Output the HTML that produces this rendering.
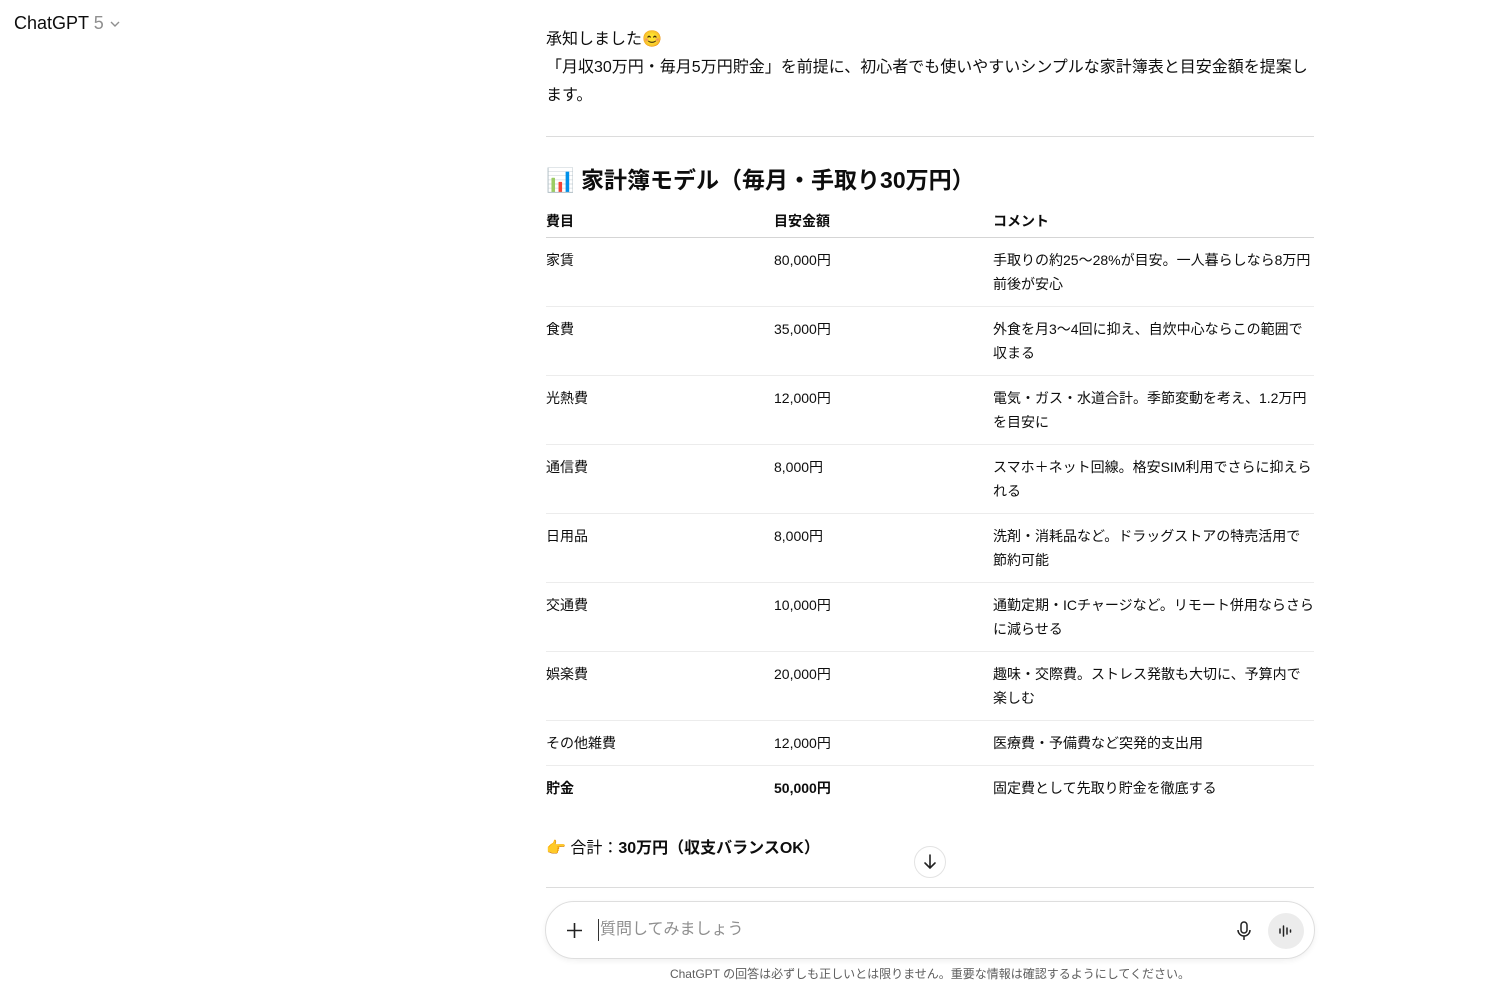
<!DOCTYPE html>
<html><head><meta charset="utf-8"><style>
*{margin:0;padding:0;box-sizing:border-box}
body{width:1500px;height:990px;background:#fff;font-family:"Liberation Sans","Noto Sans CJK JP",sans-serif;color:#0d0d0d;position:relative;overflow:hidden}
.top{position:absolute;left:14px;top:13px;font-size:18px;color:#0d0d0d}
.top span{color:#8f8f8f}
.main{position:absolute;left:546px;width:768px;top:26px}
p{font-size:16px;line-height:28px}
hr{border:0;border-top:1px solid #dcdcdc;margin:26px 0 0}
h2{font-size:23px;font-weight:700;margin-top:26px;line-height:34px}
table{width:768px;border-collapse:collapse;margin-top:10px;font-size:14px}
th{text-align:left;font-weight:700;font-size:14px;padding:5px 0 7px;border-bottom:1px solid #d5d5d5;line-height:18px}
td{vertical-align:top;padding:10px 0 10px;line-height:24px;border-bottom:1px solid #ececec}
tr:last-child td{border-bottom:0}
.c1{width:228px}.c2{width:219px}
.sum{position:absolute;left:546px;top:834px;font-size:16px}
.down{position:absolute;left:914px;top:846px;width:32px;height:32px;border:1px solid #e3e3e3;border-radius:50%;background:#fff}
.line{position:absolute;left:546px;width:768px;top:887px;border-top:1px solid #dcdcdc}
.input{position:absolute;left:545px;top:901px;width:770px;height:58px;border:1px solid #dedede;border-radius:29px;box-shadow:0 2px 6px rgba(0,0,0,.06)}
.ph{position:absolute;left:52px;top:17px;font-size:16px;color:#8f8f8f;border-left:1px solid #333;padding-left:1px;line-height:22px}
.voice{position:absolute;right:10px;top:11px;width:36px;height:36px;border-radius:50%;background:#ececec}
.foot{position:absolute;left:546px;width:768px;text-align:center;top:965px;font-size:12px;color:#5d5d5d;white-space:nowrap}
</style></head><body>
<div class="top">ChatGPT <span>5</span> <svg width="12" height="10" viewBox="0 0 12 10"><path d="M2 3l4 4 4-4" stroke="#8f8f8f" stroke-width="1.4" fill="none"/></svg></div>
<div class="main">
<p>承知しました😊<br>「月収30万円・毎月5万円貯金」を前提に、初心者でも使いやすいシンプルな家計簿表と目安金額を提案します。</p>
<hr>
<h2>📊 家計簿モデル（毎月・手取り30万円）</h2>
<table>
<tr><th class="c1">費目</th><th class="c2">目安金額</th><th>コメント</th></tr>
<tr><td>家賃</td><td>80,000円</td><td>手取りの約25〜28%が目安。一人暮らしなら8万円前後が安心</td></tr>
<tr><td>食費</td><td>35,000円</td><td>外食を月3〜4回に抑え、自炊中心ならこの範囲で収まる</td></tr>
<tr><td>光熱費</td><td>12,000円</td><td>電気・ガス・水道合計。季節変動を考え、1.2万円を目安に</td></tr>
<tr><td>通信費</td><td>8,000円</td><td>スマホ＋ネット回線。格安SIM利用でさらに抑えられる</td></tr>
<tr><td>日用品</td><td>8,000円</td><td>洗剤・消耗品など。ドラッグストアの特売活用で節約可能</td></tr>
<tr><td>交通費</td><td>10,000円</td><td>通勤定期・ICチャージなど。リモート併用ならさらに減らせる</td></tr>
<tr><td>娯楽費</td><td>20,000円</td><td>趣味・交際費。ストレス発散も大切に、予算内で楽しむ</td></tr>
<tr><td>その他雑費</td><td>12,000円</td><td>医療費・予備費など突発的支出用</td></tr>
<tr><td><b>貯金</b></td><td><b>50,000円</b></td><td>固定費として先取り貯金を徹底する</td></tr>
</table>
</div>
<div class="sum">👉 合計：<b>30万円（収支バランスOK）</b></div>
<div class="down"><svg width="30" height="30" viewBox="0 0 30 30"><path d="M15 8v13M10 16l5 5 5-5" stroke="#222" stroke-width="1.6" fill="none" stroke-linecap="round"/></svg></div>
<div class="line"></div>
<div class="input">
<svg style="position:absolute;left:20px;top:20px" width="17" height="17" viewBox="0 0 17 17"><path d="M8.5 1v15M1 8.5h15" stroke="#222" stroke-width="1.6"/></svg>
<div class="ph">質問してみましょう</div>
<svg style="position:absolute;right:62px;top:19px" width="16" height="20" viewBox="0 0 16 20"><rect x="5" y="1" width="6" height="11" rx="3" fill="none" stroke="#222" stroke-width="1.5"/><path d="M2 9a6 6 0 0012 0M8 15v4" stroke="#222" stroke-width="1.5" fill="none"/></svg>
<div class="voice"><svg width="36" height="36" viewBox="0 0 36 36"><path d="M12 16v4M15.5 13v10M19 15v6M22.5 17v2" stroke="#222" stroke-width="1.5" stroke-linecap="round"/></svg></div>
</div>
<div class="foot">ChatGPT の回答は必ずしも正しいとは限りません。重要な情報は確認するようにしてください。</div>
</body></html>
